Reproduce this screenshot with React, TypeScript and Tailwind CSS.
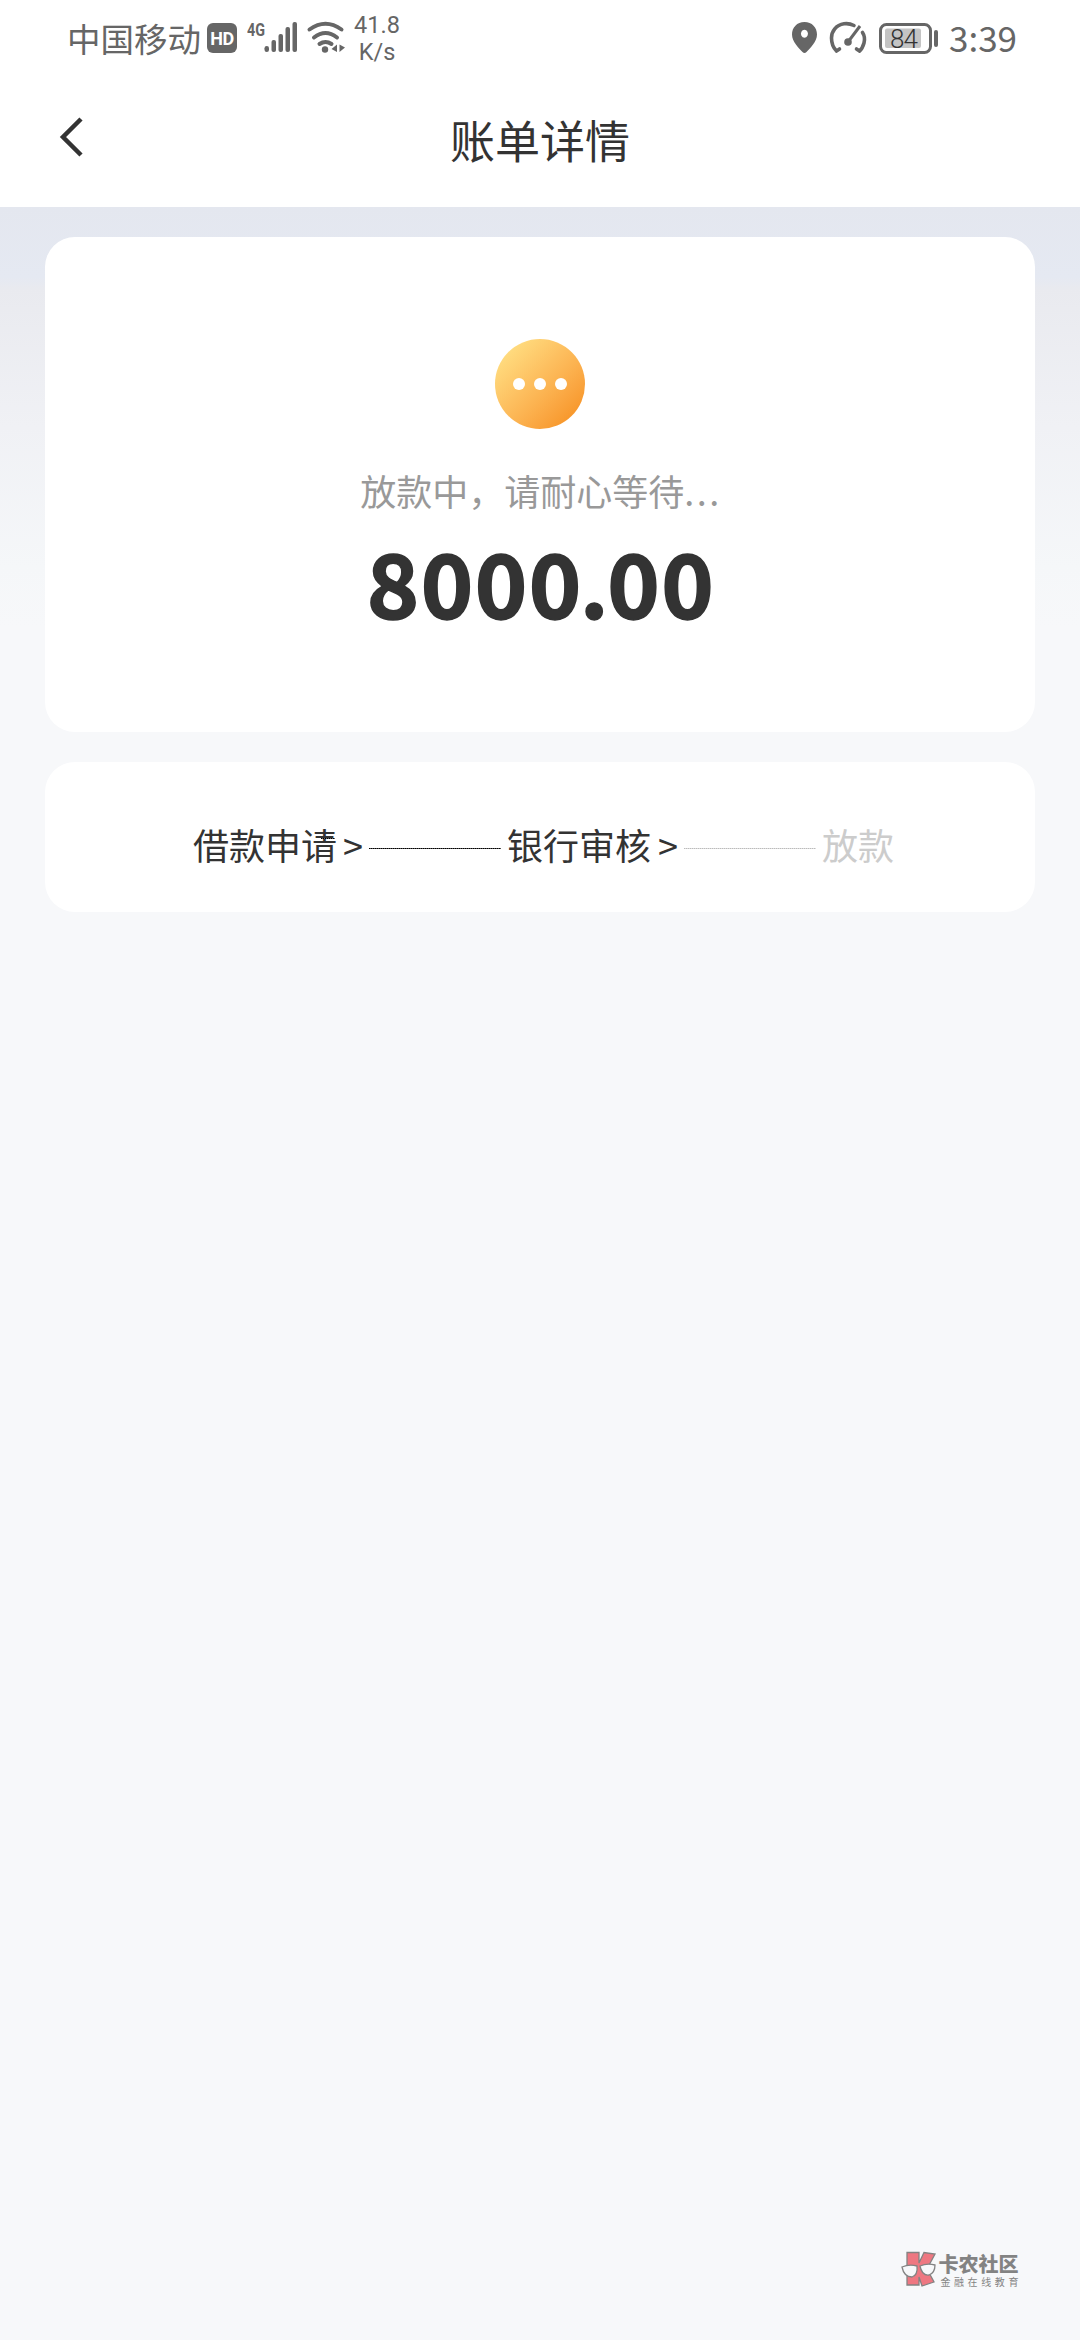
import React from "react";

function StatusBar() {
  return (
    <div className="flex h-[76px] items-center text-[#666]">
      <span className="ml-[67px] w-[134px] text-[33.5px] leading-[76px] font-['Noto_Sans_CJK_SC',sans-serif] whitespace-nowrap">中国移动</span>
      <span className="ml-[6px] flex h-[30px] w-[30px] items-center justify-center rounded-[6px] bg-[#666] font-['Roboto',sans-serif] text-[18px] font-bold tracking-tight text-white">HD</span>
      <svg className="ml-[10px] h-[76px] w-[54px]" viewBox="0 0 54 76" fill="#666">
        <text x="0" y="36" fontFamily="Roboto" fontWeight="700" fontSize="19" textLength="18" lengthAdjust="spacingAndGlyphs">4G</text>
        <rect x="17.5" y="46" width="4.5" height="6" rx="2.2" />
        <rect x="24.5" y="40" width="4.5" height="12" rx="2" />
        <rect x="31.5" y="34" width="4.5" height="18" rx="2" />
        <rect x="38.5" y="27" width="4.5" height="25" rx="2" />
        <rect x="45.5" y="22" width="4.5" height="30" rx="2" />
      </svg>
      <svg className="ml-[4px] h-[76px] w-[42px]" viewBox="305 0 42 76" fill="none" stroke="#666" strokeWidth="4" strokeLinecap="round">
        <path d="M309.500 29.500Q325.500 18 341.500 29.500M314 37.500Q325.500 28.500 337 37.500M319.500 44Q325.500 40 331.500 44" />
        <circle cx="325" cy="49.500" r="3.200" fill="#666" stroke="none" />
        <path d="M337 44.500V52L331.500 49ZM339.500 44.500V52L345 47.500Z" fill="#666" stroke="none" />
      </svg>
      <span className="ml-[5px] mt-[2px] w-[50px] text-center font-['Roboto',sans-serif] text-[23.500px] leading-[27px]">41.8<br />K/s</span>
      <div className="ml-auto mr-[65px] flex items-center">
        <svg className="h-[76px] w-[160px]" viewBox="784 0 160 76" fill="none" stroke="#666">
          <path fillRule="evenodd" fill="#666" stroke="none" d="M803.500 22C796 22 791 27.500 791 34.500C791 42 798 48 801.500 52Q803.500 54 805.500 52C809 48 816 42 816 34.500C816 27.500 811 22 803.500 22ZM803.500 29.700A3.500 4 0 1 1 803.400 29.700Z" />
          <path strokeWidth="3.600" strokeLinecap="round" d="M853 25.500Q848 23 843 23.800C835 25 830.500 31.500 830.500 38Q830.500 46 835.500 51M835.500 51L838.500 49M861.500 32.500Q864.500 37 863 43Q861.500 48.500 858.500 51M858.500 51L855.500 49" />
          <path strokeWidth="3" d="M859 26L847 42" />
          <circle cx="847" cy="42" r="3.800" fill="#666" stroke="none" />
          <rect x="879.500" y="24.500" width="50" height="28" rx="6" strokeWidth="3" />
          <rect x="884" y="28.500" width="36" height="19.500" rx="2" fill="#c4c4c4" stroke="none" />
          <rect x="933" y="30" width="4" height="17" rx="2" fill="#666" stroke="none" />
          <text x="889" y="48" fontFamily="Roboto" fontWeight="300" fontSize="26" textLength="28" fill="#333" stroke="none">84</text>
        </svg>
        <span className="-mt-[2px] ml-[4px] w-[66px] whitespace-nowrap font-['Noto_Sans_CJK_SC',sans-serif] text-[35px] leading-[76px]">3:39</span>
      </div>
    </div>
  );
}

function Header() {
  return (
    <div className="relative flex h-[131px] items-center justify-center">
      <svg className="absolute left-[57px] top-[38px] h-[46px] w-[30px]" viewBox="0 0 30 46" fill="none" stroke="#333" strokeWidth="4.500">
        <path d="M24 5L6 23L24 41" />
      </svg>
      <h1 className="-mt-[4px] text-[45px] leading-[60px] text-[#333] font-['Noto_Sans_CJK_SC',sans-serif]">账单详情</h1>
    </div>
  );
}

function Logo() {
  return (
    <div className="flex items-center opacity-90">
      <svg className="h-[38px] w-[36px]" viewBox="0 0 36 38" stroke="#777" strokeWidth="1.300">
        <path fill="#ee6a74" d="M6 1.500H18V12L23 1.500L34 3L26 18L33 31L21 35L18 26V34H6Z" />
        <path fill="#f8f8fa" d="M1 16Q8 13 16 15Q17 24 11 26Q3 26 1 16ZM19 15Q26 12 34 14Q34 22 28 24Q21 25 19 15Z" />
      </svg>
      <div className="ml-[1px] flex flex-col gap-[3px] font-['Noto_Sans_CJK_SC',sans-serif] text-[#777]">
        <span className="text-[20px] font-black leading-[20px] whitespace-nowrap">卡农社区</span>
        <span className="ml-[2px] text-[10px] leading-[10px] tracking-[3.600px] whitespace-nowrap">金融在线教育</span>
      </div>
    </div>
  );
}

export default function App() {
  return (
    <div className="flex h-[2340px] w-[1080px] flex-col overflow-hidden bg-white">
      <StatusBar />
      <Header />
      <main className="flex flex-1 flex-col bg-[#f7f8fa] bg-[linear-gradient(#e4e7ef_0px,#e5e9f2_70px,#e9eaef_82px,#f0f1f5_220px,#f5f7f9_360px,#f7f8fa_420px)] px-[45px] pt-[30px]">
        <section className="flex h-[495px] flex-col items-center rounded-[30px] bg-white pt-[102px]">
          <div className="flex h-[90px] w-[90px] items-center justify-center gap-[9px] rounded-full bg-linear-to-br from-[#ffe88c] to-[#f58a0a]">
            <i className="size-[12px] rounded-full bg-white" />
            <i className="size-[12px] rounded-full bg-white" />
            <i className="size-[12px] rounded-full bg-white" />
          </div>
          <p className="mt-[34px] ml-[2px] text-[36px] leading-[54px] text-[#999] font-['Noto_Sans_CJK_SC',sans-serif]">放款中，请耐心等待<span className="tracking-[2.500px]">...</span></p>
          <p className="mt-[17px] ml-[2px] text-[89px] leading-[94px] font-bold tracking-[1.500px] text-[#333] font-['Noto_Sans_CJK_SC',sans-serif] [-webkit-text-stroke:1.500px_#333]">8000<span className="-mx-[3px]">.</span>00</p>
        </section>
        <section className="mt-[30px] flex h-[150px] items-center rounded-[30px] bg-white pl-[148px] text-[36px] leading-[54px] text-[#333] font-['Noto_Sans_CJK_SC',sans-serif]">
          <span className="relative mt-[13px] w-[144px] whitespace-nowrap">
            借款申请
            <i className="absolute left-[128px] top-[21px] h-px w-[14px] bg-[repeating-linear-gradient(90deg,#000_0_1px,#666_1px_2px)]" />
          </span>
          <span className="mt-[13px] ml-[6px] w-[26px]">&gt;</span>
          <i className="mt-[23px] h-px w-[132px] bg-[repeating-linear-gradient(90deg,#000_0_1px,#555_1px_2px)]" />
          <span className="mt-[13px] ml-[6px] w-[144px] whitespace-nowrap">银行审核</span>
          <span className="mt-[13px] ml-[7px] w-[26px]">&gt;</span>
          <i className="mt-[23px] h-px w-[132px] bg-[repeating-linear-gradient(90deg,#bbb_0_1px,#ddd_1px_2px)]" />
          <span className="mt-[13px] ml-[6px] text-[#ccc] whitespace-nowrap">放款</span>
        </section>
        <footer className="mt-auto mr-[13px] flex justify-end pb-[51px]">
          <Logo />
        </footer>
      </main>
    </div>
  );
}
